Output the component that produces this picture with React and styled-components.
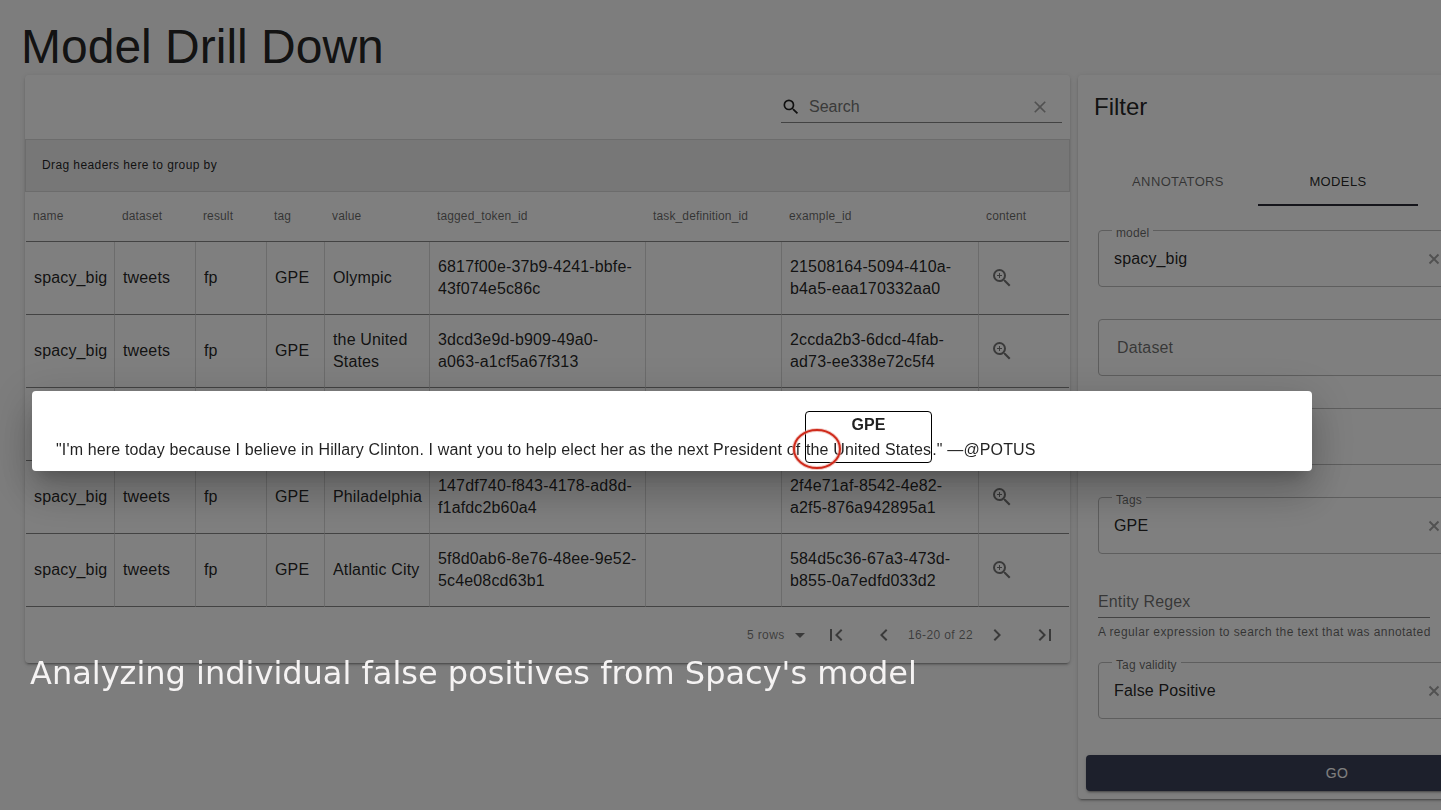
import React, { useState } from "react";

import styled, { createGlobalStyle } from "styled-components";

import {
  MdArrowDropDown,
  MdChevronLeft,
  MdChevronRight,
  MdClear,
  MdFirstPage,
  MdLastPage,
  MdSearch,
  MdZoomIn,
} from "react-icons/md";

const GlobalStyle = createGlobalStyle`
  *, *::before, *::after {
    box-sizing: border-box;
  }

  body {
    margin: 0;
    overflow: hidden;
    background: #fafafa;
    color: rgba(0, 0, 0, 0.87);
    font-family: "Liberation Sans", Arial, sans-serif;
    font-size: 16px;
    letter-spacing: 0.00938em;
  }

  button, input, select {
    margin: 0;
    padding: 0;
    border: 0;
    outline: 0;
    background: none;
    color: inherit;
    font: inherit;
    letter-spacing: inherit;
  }

  button {
    cursor: pointer;
  }
`;

const caption = `
  font-size: 12px;
  line-height: 20px;
  letter-spacing: 0.03333em;
`;

const Page = styled.main`
  padding: 18px 0 10px 25px;
`;

const Title = styled.h1`
  margin: 0 0 0 -4px;
  font-size: 48px;
  font-weight: 400;
  line-height: 57px;
  letter-spacing: 0;
`;

const Columns = styled.div`
  display: grid;
  grid-template-columns: minmax(1045px, 2fr) minmax(518px, 1fr);
  gap: 8px;
  align-items: start;
`;

const Paper = styled.section`
  border-radius: 4px;
  background: #fff;
  box-shadow: 0 3px 1px -2px rgba(0, 0, 0, 0.2),
    0 2px 2px 0 rgba(0, 0, 0, 0.14), 0 1px 5px 0 rgba(0, 0, 0, 0.12);
`;

/* table */
const Toolbar = styled.div`
  display: flex;
  justify-content: flex-end;
  align-items: center;
  height: 64px;
  padding: 0 8px;
`;

const SearchBox = styled.label`
  display: flex;
  align-items: center;
  width: 281px;
  height: 32px;
  border-bottom: 1px solid #868686;
`;

const SearchInput = styled.input`
  flex: 1;
  min-width: 0;
  margin-left: 8px;
  letter-spacing: 0;

  &::placeholder {
    color: #757575;
    opacity: 1;
  }
`;

const IconButton = styled.button`
  display: flex;
  align-items: center;
  justify-content: center;
  flex: none;
  width: ${(p) => p.$size || 48}px;
  height: ${(p) => p.$size || 48}px;
  color: ${(p) => (p.$faded ? "rgba(0, 0, 0, 0.36)" : "rgba(0, 0, 0, 0.54)")};
`;

const GroupBar = styled.div`
  display: flex;
  align-items: center;
  height: 53px;
  padding: 0 16px 2px;
  border: 1px solid #d8d8d8;
  background: #eee;
  ${caption}
`;

const Table = styled.table`
  width: 100%;
  padding: 0 1px;
  table-layout: fixed;
  border-spacing: 0;
`;

const Column = styled.col`
  width: ${(p) => p.$width};
`;

const HeadCell = styled.th`
  height: 50px;
  padding: 0 7px 2px;
  border-bottom: 1px solid #868686;
  color: rgba(0, 0, 0, 0.6);
  font-size: 12px;
  font-weight: 400;
  letter-spacing: 0.01071em;
  text-align: left;
`;

const Cell = styled.td`
  height: 73px;
  padding: 0 ${(p) => (p.$tight ? 0 : 7)}px 0 8px;
  border-right: 1px solid #d8d8d8;
  border-bottom: 1px solid #868686;
  line-height: 22px;

  &:last-child {
    border-right: 0;
  }
`;

const ZoomButton = styled(IconButton)`
  width: 30px;
`;

const Footer = styled.div`
  display: flex;
  align-items: center;
  justify-content: flex-end;
  height: 56px;
  padding-right: 1px;
  color: rgba(0, 0, 0, 0.54);
  ${caption}
`;

const PageSize = styled.div`
  display: grid;
  align-items: center;
  width: 65px;

  > * {
    grid-area: 1 / 1;
  }

  svg {
    justify-self: end;
    pointer-events: none;
  }
`;

const PageSizeSelect = styled.select`
  appearance: none;
  width: 100%;
`;

/* filter */
const FilterPaper = styled(Paper)`
  padding: 16px 8px 8px;
`;

const FilterTitle = styled.h2`
  margin: 0 8px 34px;
  font-size: 24px;
  font-weight: 400;
  line-height: 32px;
  letter-spacing: 0;
`;

const Tabs = styled.div`
  display: flex;
  margin: 0 12px 24px;
`;

const Tab = styled.button`
  width: 160px;
  height: 49px;
  padding-top: 2px;
  border-bottom: 2px solid ${(p) => (p.$active ? "#2b2b36" : "transparent")};
  color: ${(p) => (p.$active ? "rgba(0, 0, 0, 0.87)" : "rgba(0, 0, 0, 0.6)")};
  font-size: 13px;
  letter-spacing: 0.02857em;
  text-transform: uppercase;
`;

const Form = styled.form`
  display: flex;
  flex-direction: column;
`;

const Field = styled.div`
  position: relative;
  display: flex;
  align-items: center;
  width: 380px;
  height: 57px;
  margin: 0 12px 32px;
  padding: 0 5px 0 ${(p) => (p.$filled ? 15 : 18)}px;
  border: 1px solid #bcbcbc;
  border-radius: 4px;
`;

/* sits in the notch of the field's outline */
const FieldLabel = styled.label`
  position: absolute;
  top: -6px;
  left: 13px;
  padding: 0 4px;
  background: #fff;
  color: rgba(0, 0, 0, 0.6);
  font-size: 12px;
  line-height: 16px;
  letter-spacing: 0.00938em;
`;

const FieldInput = styled.input`
  flex: 1;
  min-width: 0;

  &::placeholder {
    color: rgba(0, 0, 0, 0.58);
    opacity: 1;
  }
`;

const RegexField = styled.div`
  width: 332px;
  margin: 0 12px 20px;
`;

const RegexInput = styled(FieldInput)`
  display: block;
  width: 100%;
  height: 32px;
  border-bottom: 1px solid #868686;
`;

const Helper = styled.p`
  margin: 4px 0 0;
  color: rgba(0, 0, 0, 0.6);
  white-space: nowrap;
  ${caption}
`;

const GoButton = styled.button`
  height: 36px;
  margin-top: 4px;
  border-radius: 4px;
  background: #3b4159;
  box-shadow: 0 3px 1px -2px rgba(0, 0, 0, 0.2),
    0 2px 2px 0 rgba(0, 0, 0, 0.14), 0 1px 5px 0 rgba(0, 0, 0, 0.12);
  color: #fff;
  font-size: 14px;
  letter-spacing: 0.02857em;
`;

/* dialog */
const Backdrop = styled.div`
  position: fixed;
  inset: 0;
  display: flex;
  align-items: center;
  padding: 52px 32px 0;
  background: rgba(0, 0, 0, 0.5);
`;

const Dialog = styled.div`
  width: 100%;
  max-width: 1280px;
  padding: 20px 24px 8px;
  border-radius: 4px;
  background: #fff;
  box-shadow: 0 11px 15px -7px rgba(0, 0, 0, 0.2),
    0 24px 38px 3px rgba(0, 0, 0, 0.14), 0 9px 46px 8px rgba(0, 0, 0, 0.12);
`;

const Sentence = styled.p`
  margin: 0;
  line-height: 25px;
`;

const Entity = styled.span`
  position: relative;
  display: inline-block;
  border: 1px solid #000;
  border-radius: 4px;
`;

const EntityTag = styled.strong`
  display: block;
  text-align: center;
`;

const Marker = styled.svg`
  position: absolute;
  left: -14px;
  bottom: -8px;
  overflow: visible;
  pointer-events: none;
`;

const Subtitle = styled.p`
  position: fixed;
  left: 30px;
  bottom: 118px;
  margin: 0;
  color: #f5f3f3;
  font-family: "DejaVu Sans", sans-serif;
  font-size: 32px;
  line-height: 38px;
  letter-spacing: 0;
`;

const columns = [
  { name: "name", width: "89px" },
  { name: "dataset", width: "81px" },
  { name: "result", width: "71px" },
  { name: "tag", width: "58px" },
  { name: "value", width: "105px" },
  { name: "tagged_token_id", width: "216px" },
  { name: "task_definition_id", width: "136px" },
  { name: "example_id", width: "197px" },
  { name: "content", width: "auto" },
];

const rows = [
  ["Olympic", "6817f00e-37b9-4241-bbfe-43f074e5c86c", "21508164-5094-410a-b4a5-eaa170332aa0"],
  ["the United States", "3dcd3e9d-b909-49a0-a063-a1cf5a67f313", "2ccda2b3-6dcd-4fab-ad73-ee338e72c5f4"],
  ["", "", ""],
  ["Philadelphia", "147df740-f843-4178-ad8d-f1afdc2b60a4", "2f4e71af-8542-4e82-a2f5-876a942895a1"],
  ["Atlantic City", "5f8d0ab6-8e76-48ee-9e52-5c4e08cd63b1", "584d5c36-67a3-473d-b855-0a7edfd033d2"],
];

function FilterField({ id, label, value, placeholder }) {
  const [text, setText] = useState(value || "");

  return (
    <Field $filled={Boolean(value)}>
      {label && <FieldLabel htmlFor={id}>{label}</FieldLabel>}
      <FieldInput
        id={id}
        aria-label={label ? undefined : placeholder || id}
        placeholder={placeholder}
        value={text}
        onChange={(e) => setText(e.target.value)}
      />
      {value && (
        <IconButton type="button" $size={28} $faded aria-label="Clear" onClick={() => setText("")}>
          <svg width="12" height="12" viewBox="0 0 12 12" stroke="currentColor" strokeWidth="2">
            <path d="M1.5 1.5L10.5 10.5M10.5 1.5L1.5 10.5" />
          </svg>
        </IconButton>
      )}
      <IconButton type="button" $size={24} aria-label="Open">
        <MdArrowDropDown size={24} />
      </IconButton>
    </Field>
  );
}

function ResultsTable() {
  return (
    <Paper>
      <Toolbar>
        <SearchBox>
          <MdSearch size={20} />
          <SearchInput placeholder="Search" aria-label="Search" />
          <IconButton $size={44} $faded aria-label="Clear search">
            <MdClear size={20} />
          </IconButton>
        </SearchBox>
      </Toolbar>
      <GroupBar>Drag headers here to group by</GroupBar>
      <Table>
        <colgroup>
          {columns.map((c) => (
            <Column key={c.name} $width={c.width} />
          ))}
        </colgroup>
        <thead>
          <tr>
            {columns.map((c) => (
              <HeadCell key={c.name}>{c.name}</HeadCell>
            ))}
          </tr>
        </thead>
        <tbody>
          {rows.map(([value, token, example], i) => (
            <tr key={i}>
              <Cell $tight>spacy_big</Cell>
              <Cell>tweets</Cell>
              <Cell>fp</Cell>
              <Cell>GPE</Cell>
              <Cell>{value}</Cell>
              <Cell>{token}</Cell>
              <Cell />
              <Cell>{example}</Cell>
              <Cell>
                <ZoomButton aria-label="Show content">
                  <MdZoomIn size={24} />
                </ZoomButton>
              </Cell>
            </tr>
          ))}
        </tbody>
      </Table>
      <Footer>
        <PageSize>
          <PageSizeSelect aria-label="Rows per page" defaultValue="5">
            <option value="5">5 rows</option>
            <option value="10">10 rows</option>
            <option value="20">20 rows</option>
          </PageSizeSelect>
          <MdArrowDropDown size={24} />
        </PageSize>
        <IconButton aria-label="First page">
          <MdFirstPage size={24} />
        </IconButton>
        <IconButton aria-label="Previous page">
          <MdChevronLeft size={24} />
        </IconButton>
        <span>16-20 of 22</span>
        <IconButton aria-label="Next page">
          <MdChevronRight size={24} />
        </IconButton>
        <IconButton aria-label="Last page">
          <MdLastPage size={24} />
        </IconButton>
      </Footer>
    </Paper>
  );
}

function FilterPanel() {
  const [tab, setTab] = useState("Models");

  return (
    <FilterPaper>
      <FilterTitle>Filter</FilterTitle>
      <Tabs role="tablist">
        {["Annotators", "Models"].map((name) => (
          <Tab
            key={name}
            role="tab"
            aria-selected={tab === name}
            $active={tab === name}
            onClick={() => setTab(name)}
          >
            {name}
          </Tab>
        ))}
      </Tabs>
      <Form onSubmit={(e) => e.preventDefault()}>
        <FilterField id="model" label="model" value="spacy_big" />
        <FilterField id="dataset" placeholder="Dataset" />
        <FilterField id="result" />
        <FilterField id="tags" label="Tags" value="GPE" />
        <RegexField>
          <RegexInput placeholder="Entity Regex" aria-label="Entity Regex" />
          <Helper>A regular expression to search the text that was annotated</Helper>
        </RegexField>
        <FilterField id="validity" label="Tag validity" value="False Positive" />
        <GoButton>GO</GoButton>
      </Form>
    </FilterPaper>
  );
}

function ExampleDialog() {
  return (
    <Backdrop>
      <Dialog role="dialog" aria-label="Example">
        <Sentence>
          "I'm here today because I believe in Hillary Clinton. I want you to help elect her as the
          next President of{" "}
          <Entity>
            <EntityTag>GPE</EntityTag>
            the United States
            <Marker width="48" height="42" viewBox="0 0 48 42" fill="none">
              <ellipse cx="25" cy="21" rx="23" ry="19" stroke="#e9a59c" strokeWidth="4" opacity="0.6" />
              <ellipse cx="25" cy="21" rx="23" ry="19" stroke="#cf2a1b" strokeWidth="2" />
            </Marker>
          </Entity>
          ." —@POTUS
        </Sentence>
      </Dialog>
    </Backdrop>
  );
}

export default function App() {
  return (
    <>
      <GlobalStyle />
      <Page>
        <Title>Model Drill Down</Title>
        <Columns>
          <ResultsTable />
          <FilterPanel />
        </Columns>
      </Page>
      <ExampleDialog />
      <Subtitle>Analyzing individual false positives from Spacy's model</Subtitle>
    </>
  );
}
